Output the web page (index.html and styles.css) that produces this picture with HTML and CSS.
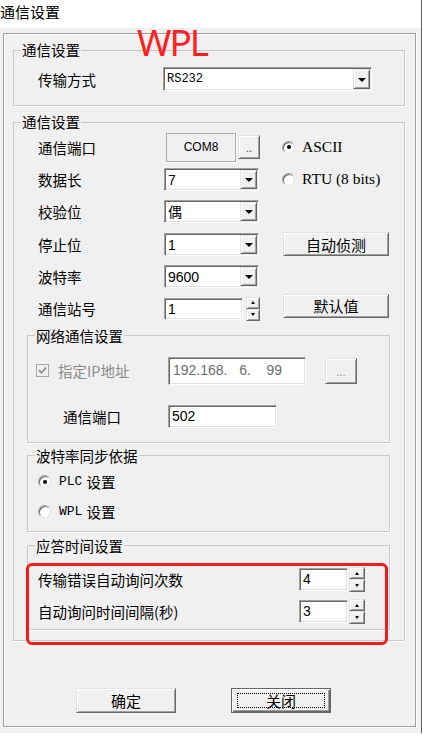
FILE: index.html
```html
<!DOCTYPE html>
<html lang="zh-CN">

<head>
    <meta charset="UTF-8">
    <meta name="viewport" content="width=device-width, initial-scale=1.0">
    <title>通信设置</title>
    <link rel="stylesheet" href="styles.css">
</head>

<body>
    <div class="window">
        <div class="titlebar">通信设置</div>
        <span class="mark">WPL</span>

        <div class="frame">
            <fieldset class="group">
                <legend>通信设置</legend>
                <div class="link-row">
                    <span class="lbl">传输方式</span>
                    <div class="combo field wide"><span class="val mono">RS232</span><span class="drop raised"></span></div>
                </div>
            </fieldset>

            <fieldset class="group main">
                <legend>通信设置</legend>
                <div class="serial">
                    <span>通信端口</span>
                    <div class="port">
                        <span class="static">COM8</span>
                        <button class="btn raised tiny">..</button>
                    </div>
                    <label class="opt"><span class="radio on"></span>ASCII</label>

                    <span>数据长</span>
                    <div class="combo field"><span class="val">7</span><span class="drop raised"></span></div>
                    <label class="opt"><span class="radio"></span>RTU (8 bits)</label>

                    <span>校验位</span>
                    <div class="combo field"><span class="val">偶</span><span class="drop raised"></span></div>
                    <span></span>

                    <span>停止位</span>
                    <div class="combo field"><span class="val">1</span><span class="drop raised"></span></div>
                    <button class="btn raised side">自动侦测</button>

                    <span>波特率</span>
                    <div class="combo field"><span class="val">9600</span><span class="drop raised"></span></div>
                    <span></span>

                    <span>通信站号</span>
                    <div class="spinbox">
                        <span class="field edit station">1</span>
                        <span class="spin"><span class="raised up"></span><span class="raised down"></span></span>
                    </div>
                    <button class="btn raised side lift">默认值</button>
                </div>

                <div class="inner">
                    <fieldset class="group">
                        <legend>网络通信设置</legend>
                        <div class="net">
                            <div class="ip-row">
                                <label class="check">
                                    <svg width="13" height="13" viewBox="0 0 13 13">
                                        <rect x="0.5" y="0.5" width="12" height="12" fill="#f0f0f0" stroke="#a6a6a6" />
                                        <path d="M3 6.2 L5.4 8.8 L10 3.6" fill="none" stroke="#8a8a8a" stroke-width="1.7" />
                                    </svg>
                                    指定IP地址
                                </label>
                                <span class="field ip">192.168.   6.    99</span>
                                <button class="btn raised more">...</button>
                            </div>
                            <div class="port-row">
                                <span>通信端口</span>
                                <span class="field edit tcp">502</span>
                            </div>
                        </div>
                    </fieldset>

                    <fieldset class="group sync-group">
                        <legend>波特率同步依据</legend>
                        <div class="sync">
                            <label class="opt-row"><span class="radio on"></span><span class="code">PLC</span> 设置</label>
                            <label class="opt-row"><span class="radio"></span><span class="code">WPL</span> 设置</label>
                        </div>
                    </fieldset>

                    <fieldset class="group resp-group">
                        <legend>应答时间设置</legend>
                        <div class="resp">
                            <span>传输错误自动询问次数</span>
                            <span class="field edit">4</span>
                            <span class="spin wide-spin"><span class="raised up"></span><span class="raised down"></span></span>

                            <span>自动询问时间间隔(秒)</span>
                            <span class="field edit">3</span>
                            <span class="spin wide-spin"><span class="raised up"></span><span class="raised down"></span></span>

                            <div class="highlight"></div>
                        </div>
                    </fieldset>
                </div>
            </fieldset>

            <div class="actions">
                <button class="btn raised big">确定</button>
                <button class="btn raised big focus">关闭</button>
            </div>
        </div>
    </div>
</body>

</html>
```

FILE: styles.css
```css
* {
    box-sizing: border-box;
}

body {
    margin: 0;
    background: #fff;
    font-family: "Noto Sans CJK SC", sans-serif;
    font-size: 14.5px;
    color: #000;
}

.window {
    position: relative;
    width: 422px;
    height: 733px;
    background: #f0f0f0;
    border-right: 1px solid #5f5f5f;
}

.titlebar {
    height: 28px;
    background: #fff;
    font-size: 15px;
    line-height: 24px;
}

/* red annotation written over the dialog */
.mark {
    position: absolute;
    left: 137px;
    top: 23px;
    font-family: "Noto Sans", sans-serif;
    font-size: 37px;
    line-height: 37px;
    letter-spacing: -2px;
    color: #ff1f1f;
}

.frame {
    width: 413px;
    height: 694px;
    margin: 5px 0 0 3px;
    padding: 8px 10px 0 9px;
    border: 1px solid #a0a0a0;
    box-shadow: inset 1px 1px 0 #fff, 1px 1px 0 #fff;
}

.group {
    margin: 0;
    padding: 0;
    min-width: 0;
    border: 1px solid #c9c9c9;
    box-shadow: 1px 1px 0 #fff;
}

.group legend {
    margin-left: 7px;
    padding: 0 1px;
    line-height: 16px;
}

.main {
    margin-top: 8px;
}

/* shared win32 looks */
.field {
    background: #fff;
    border: 1px solid;
    border-color: #a0a0a0 #fff #fff #a0a0a0;
    box-shadow: inset 1px 1px 0 #696969, inset -1px -1px 0 #e3e3e3;
    font-family: "Liberation Sans", "Noto Sans CJK SC", sans-serif;
    font-size: 14px;
}

.raised {
    background: #f0f0f0;
    border: 1px solid;
    border-color: #e3e3e3 #696969 #696969 #e3e3e3;
    box-shadow: inset 1px 1px 0 #fff, inset -1px -1px 0 #a0a0a0;
}

.btn {
    padding: 0;
    font: inherit;
    font-size: 15px;
    color: #000;
}

.combo {
    display: flex;
    width: 95px;
    height: 23px;
    padding: 1px;
}

.combo .val {
    flex: 1;
    padding-left: 2px;
    line-height: 20px;
}

.combo .mono {
    font-family: "Liberation Mono", monospace;
    font-size: 12px;
}

.drop {
    width: 17px;
    display: flex;
    align-items: center;
    justify-content: center;
}

.drop::after {
    content: "";
    border-top: 4px solid #000;
    border-left: 4px solid transparent;
    border-right: 4px solid transparent;
    margin-top: 1px;
}

.link-row {
    display: flex;
    align-items: center;
    padding: 9px 0 14px 24px;
}

.link-row .lbl {
    width: 125px;
}

.combo.wide {
    width: 209px;
    height: 24px;
}

/* serial settings */
.serial {
    display: grid;
    grid-template-columns: 126px 119px 106px;
    grid-auto-rows: 32.3px;
    align-items: center;
    padding: 1px 0 0 24px;
}

.port {
    display: flex;
    align-items: center;
    padding-left: 2px;
}

.static {
    width: 70px;
    height: 29px;
    display: flex;
    align-items: center;
    justify-content: center;
    border: 1px solid #ababab;
    box-shadow: 1px 1px 0 #fff;
    font-family: "Liberation Sans Narrow", "Liberation Sans", sans-serif;
    font-size: 12px;
}

.tiny {
    width: 22px;
    height: 24px;
    margin-left: 2px;
    font-size: 11px;
    line-height: 18px;
    color: #555;
}

.opt {
    display: flex;
    align-items: center;
    gap: 7px;
    margin-left: -1px;
    font-family: "Liberation Serif", serif;
    font-size: 15.5px;
}

.radio {
    width: 13px;
    height: 13px;
    flex: none;
    display: flex;
    align-items: center;
    justify-content: center;
    border-radius: 50%;
    background: #fff;
    border: 1px solid;
    border-color: #a0a0a0 #e3e3e3 #e3e3e3 #a0a0a0;
    box-shadow: inset 1px 1px 0 #6a6a6a;
}

.radio.on::after {
    content: "";
    width: 4px;
    height: 4px;
    border-radius: 50%;
    background: #000;
}

.side {
    width: 106px;
    height: 24px;
}

.lift {
    margin-bottom: 6px;
}

.spinbox {
    display: flex;
    align-items: center;
}

.edit {
    display: flex;
    align-items: center;
    height: 23px;
    padding-left: 3px;
}

.station {
    width: 79px;
    height: 22px;
}

.spin {
    display: flex;
    flex-direction: column;
    width: 14px;
    height: 24px;
    margin-left: 3px;
}

.spin span {
    flex: 1;
    display: flex;
    align-items: center;
    justify-content: center;
}

.spin .up::after,
.spin .down::after {
    content: "";
    border-left: 2px solid transparent;
    border-right: 2px solid transparent;
}

.spin .up::after {
    border-bottom: 3px solid #000;
}

.spin .down::after {
    border-top: 3px solid #000;
}

/* nested groups */
.inner {
    padding: 3px 14px 10px 13px;
}

.net {
    padding: 13px 0 14px 8px;
}

.ip-row {
    display: flex;
    align-items: center;
    height: 28px;
}

.check {
    display: flex;
    align-items: center;
    gap: 9px;
    width: 132px;
    color: #8a8a8a;
}

.ip {
    width: 138px;
    height: 28px;
    padding: 3px 0 0 4px;
    white-space: pre;
    color: #6d6d6d;
    line-height: 18px;
}

.more {
    width: 32px;
    height: 26px;
    margin-left: 19px;
    font-size: 11px;
    color: #9a9a9a;
}

.port-row {
    display: flex;
    align-items: center;
    margin-top: 20px;
    padding-left: 27px;
}

.port-row > span:first-child {
    width: 105px;
}

.tcp {
    width: 109px;
}

.sync-group {
    margin-top: 5px;
}

.sync {
    padding: 3px 0 4px 10px;
}

.opt-row {
    display: flex;
    align-items: center;
    gap: 8px;
    height: 30px;
}

.code {
    font-family: "Liberation Mono", monospace;
    font-size: 13px;
    margin-right: -4px;
}

.resp-group {
    margin-top: 6px;
}

.resp {
    position: relative;
    display: grid;
    grid-template-columns: 261px 49px 17px;
    grid-auto-rows: 23px;
    row-gap: 9px;
    align-items: center;
    padding: 14px 0 6px 10px;
}

.resp .field {
    width: 49px;
}

.wide-spin {
    width: 16px;
    height: 25px;
    margin-left: 1px;
}

.highlight {
    position: absolute;
    left: -2px;
    top: 9px;
    width: 362px;
    height: 82px;
    border: 3px solid #f31c1c;
    border-radius: 6px;
}

.actions {
    display: flex;
    gap: 55px;
    margin-top: 47px;
    padding-left: 63px;
}

.big {
    width: 100px;
    height: 25px;
}

.focus {
    position: relative;
    border-color: #646464;
    box-shadow: inset 1px 1px 0 #fff, inset -1px -1px 0 #696969, inset -2px -2px 0 #a0a0a0;
}

.focus::after {
    content: "";
    position: absolute;
    inset: 4px 5px;
    border: 1px dotted #000;
}
```
